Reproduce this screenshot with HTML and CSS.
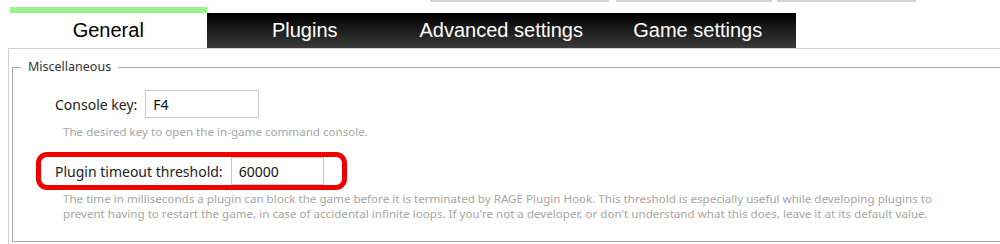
FILE: index.html
```html
<!DOCTYPE html>
<html lang="en">
  <head>
    <meta charset="UTF-8">
    <title>RAGE Plugin Hook | Settings</title>
    <link rel="stylesheet" href="styles.css">
  </head>
  <body>
    <div class="topbar">
      <span class="topbar-btn w1"></span>
      <span class="topbar-btn w2"></span>
      <span class="topbar-btn w3"></span>
    </div>

    <nav class="tabs">
      <div class="tab active">General</div>
      <div class="tab">Plugins</div>
      <div class="tab">Advanced settings</div>
      <div class="tab">Game settings</div>
    </nav>

    <section class="panel">
      <fieldset class="group">
        <legend>Miscellaneous</legend>

        <div class="row">
          <label for="consoleKey">Console key:</label>
          <input type="text" id="consoleKey" class="field key" value="F4">
        </div>
        <p class="hint">The desired key to open the in-game command console.</p>

        <div class="row highlight">
          <label for="pluginTimeout">Plugin timeout threshold:</label>
          <input type="text" id="pluginTimeout" class="field timeout" value="60000">
        </div>
        <p class="hint">The time in milliseconds a plugin can block the game before it is terminated by RAGE Plugin Hook. This threshold is especially useful while developing plugins to<br>prevent having to restart the game, in case of accidental infinite loops. If you're not a developer, or don't understand what this does, leave it at its default value.</p>
      </fieldset>
    </section>
  </body>
</html>
```

FILE: styles.css
```css
body {
  margin: 0;
  background: #fff;
  font-family: "Noto Sans", "Open Sans", sans-serif;
  color: #1e1e1e;
  overflow: hidden;
}

/* strip of buttons cut off at the top */
.topbar {
  display: flex;
  height: 7px;
  padding-left: 430px;
}

.topbar-btn {
  height: 2px;
  background: #d4d4d4;
}

.w1 { width: 179px; margin-right: 7px; }
.w2 { width: 156px; margin-right: 5px; }
.w3 { width: 139px; }

.tabs {
  display: flex;
  align-items: flex-end;
  margin-left: 10px;
}

.tab {
  width: 196.5px;
  height: 35px;
  line-height: 35px;
  text-align: center;
  font-family: "Liberation Sans", Arial, sans-serif;
  font-size: 20px;
  color: #fff;
  background: linear-gradient(#000, #3a3a3a);
}

.tab.active {
  color: #000;
  background: #fff;
  border-top: 6px solid #9cf08f;
}

.panel {
  margin-left: 8px;
  padding: 9px 0 10px 3px;
  border-top: 1px solid #d2d2d2;
  border-left: 1px solid #d2d2d2;
}

.group {
  margin: 0 -20px 0 0;
  padding: 14px 0 20px 0;
  border: 1px solid #a8a8a8;
}

.group legend {
  margin-left: 8px;
  padding: 0 7px;
  font-size: 12.5px;
  line-height: 18px;
  color: #333;
}

.row {
  position: relative;
  display: flex;
  align-items: center;
  gap: 8px;
  margin-left: 42px;
  width: max-content;
}

.row label {
  font-size: 14px;
  color: #222;
}

.field {
  box-sizing: border-box;
  height: 28px;
  padding: 0 7px;
  border: 1px solid #c8c8c8;
  font-family: "Noto Sans", sans-serif;
  font-size: 14px;
  color: #111;
  background: #fff;
}

.key { width: 114px; }
.timeout { width: 93px; }

/* red annotation drawn over the second row */
.highlight {
  margin-top: 18px;
}

.highlight::after {
  content: "";
  position: absolute;
  left: -19px;
  right: -23px;
  top: -5px;
  bottom: -5px;
  border: 5px solid #f00000;
  border-radius: 11px;
}

.hint {
  margin: 6px 0 0 50px;
  font-size: 11.6px;
  line-height: 15px;
  color: #a6a6a6;
  white-space: nowrap;
}
```
